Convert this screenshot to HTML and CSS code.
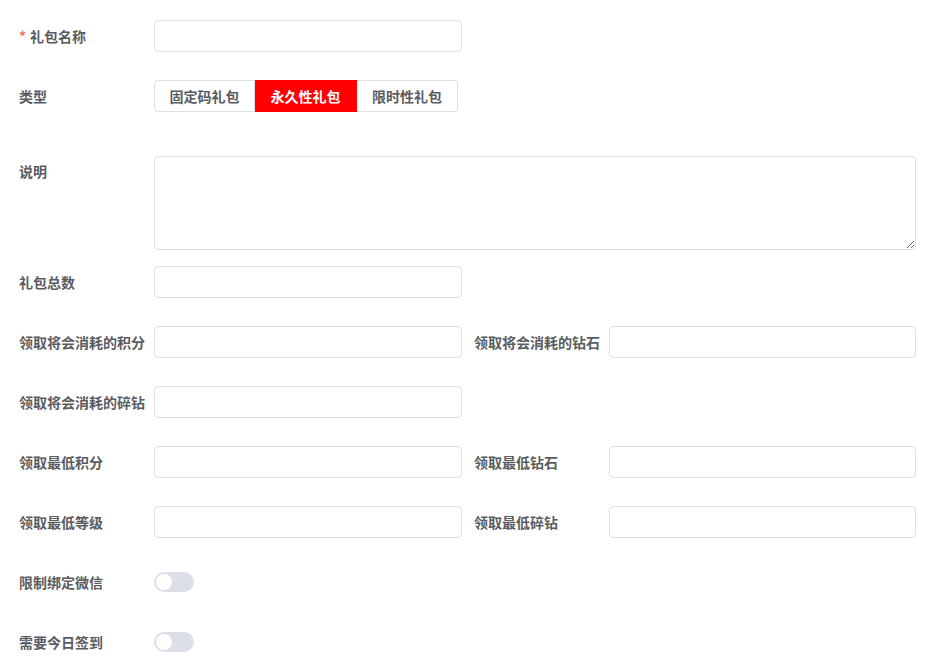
FILE: index.html
```html
<!DOCTYPE html>
<html lang="zh">
<head>
<meta charset="utf-8">
<link rel="stylesheet" href="styles.css">
</head>
<body>
<form class="form">
  <div class="row r-name">
    <label class="label"><span class="req">*</span>礼包名称</label>
    <input class="input" type="text">
  </div>
  <div class="row r-type">
    <label class="label">类型</label>
    <div class="seg">
      <span class="seg-btn">固定码礼包</span>
      <span class="seg-btn active">永久性礼包</span>
      <span class="seg-btn">限时性礼包</span>
    </div>
  </div>
  <div class="row r-desc">
    <label class="label top">说明</label>
    <textarea class="textarea"></textarea>
  </div>
  <div class="row r-total">
    <label class="label">礼包总数</label>
    <input class="input" type="text">
  </div>
  <div class="row">
    <div class="half">
      <label class="label">领取将会消耗的积分</label>
      <input class="input" type="text">
    </div>
    <div class="half">
      <label class="label">领取将会消耗的钻石</label>
      <input class="input" type="text">
    </div>
  </div>
  <div class="row">
    <div class="half">
      <label class="label">领取将会消耗的碎钻</label>
      <input class="input" type="text">
    </div>
  </div>
  <div class="row">
    <div class="half">
      <label class="label">领取最低积分</label>
      <input class="input" type="text">
    </div>
    <div class="half">
      <label class="label">领取最低钻石</label>
      <input class="input" type="text">
    </div>
  </div>
  <div class="row">
    <div class="half">
      <label class="label">领取最低等级</label>
      <input class="input" type="text">
    </div>
    <div class="half">
      <label class="label">领取最低碎钻</label>
      <input class="input" type="text">
    </div>
  </div>
  <div class="row">
    <label class="label">限制绑定微信</label>
    <span class="switch"><span class="knob"></span></span>
  </div>
  <div class="row">
    <label class="label">需要今日签到</label>
    <span class="switch"><span class="knob"></span></span>
  </div>
</form>
</body>
</html>
```

FILE: styles.css
```css
* { box-sizing: border-box; }
html, body { margin: 0; padding: 0; background: #fff; }
body {
  font-family: "Noto Sans CJK SC", "Noto Sans", sans-serif;
  font-size: 14px;
  color: #5a5c61;
}
.form {
  display: flex;
  flex-direction: column;
  gap: 28px;
  padding: 20px 20px 0 19px;
  width: 936px;
}
.row {
  display: flex;
  align-items: center;
  height: 32px;
}
.row.r-type { margin-bottom: 16px; }
.row.r-desc { align-items: flex-start; height: 94px; margin-bottom: -12px; }
.half {
  display: flex;
  align-items: center;
  width: 443px;
}
.half + .half { width: 442px; margin-left: 12px; }
.label {
  width: 135px;
  flex: none;
  font-weight: 700;
  line-height: 32px;
  margin-top: -1px;
  color: #5a5c61;
  white-space: nowrap;
}
.req { color: #f56c6c; margin-right: 4px; font-weight: 700; }
.input {
  flex: none;
  width: 308px;
  height: 32px;
  border: 1px solid #dcdfe6;
  border-radius: 4px;
  background: #fff;
  outline: none;
  padding: 0 11px;
  font: inherit;
}
.half + .half .input { width: 307px; }
.textarea {
  flex: none;
  width: 762px;
  height: 94px;
  border: 1px solid #dcdfe6;
  border-radius: 4px;
  resize: vertical;
  outline: none;
  padding: 5px 11px;
  font: inherit;
}
.seg {
  display: flex;
  height: 32px;
}
.seg-btn {
  width: 101px;
  height: 32px;
  display: flex;
  align-items: center;
  justify-content: center;
  border: 1px solid #dcdfe6;
  border-left: none;
  font-weight: 700;
  color: #5a5c61;
  background: #fff;
}
.seg-btn:first-child { border-left: 1px solid #dcdfe6; border-radius: 4px 0 0 4px; }
.seg-btn:last-child { border-radius: 0 4px 4px 0; }
.seg-btn.active {
  background: #ff0000;
  border-color: #ff0000;
  color: #fff;
  width: 102px;
}
.switch {
  position: relative;
  width: 40px;
  height: 20px;
  border-radius: 10px;
  background: #dcdfe6;
  flex: none;
}
.knob {
  position: absolute;
  left: 2px;
  top: 2px;
  width: 16px;
  height: 16px;
  border-radius: 50%;
  background: #fff;
}
```
